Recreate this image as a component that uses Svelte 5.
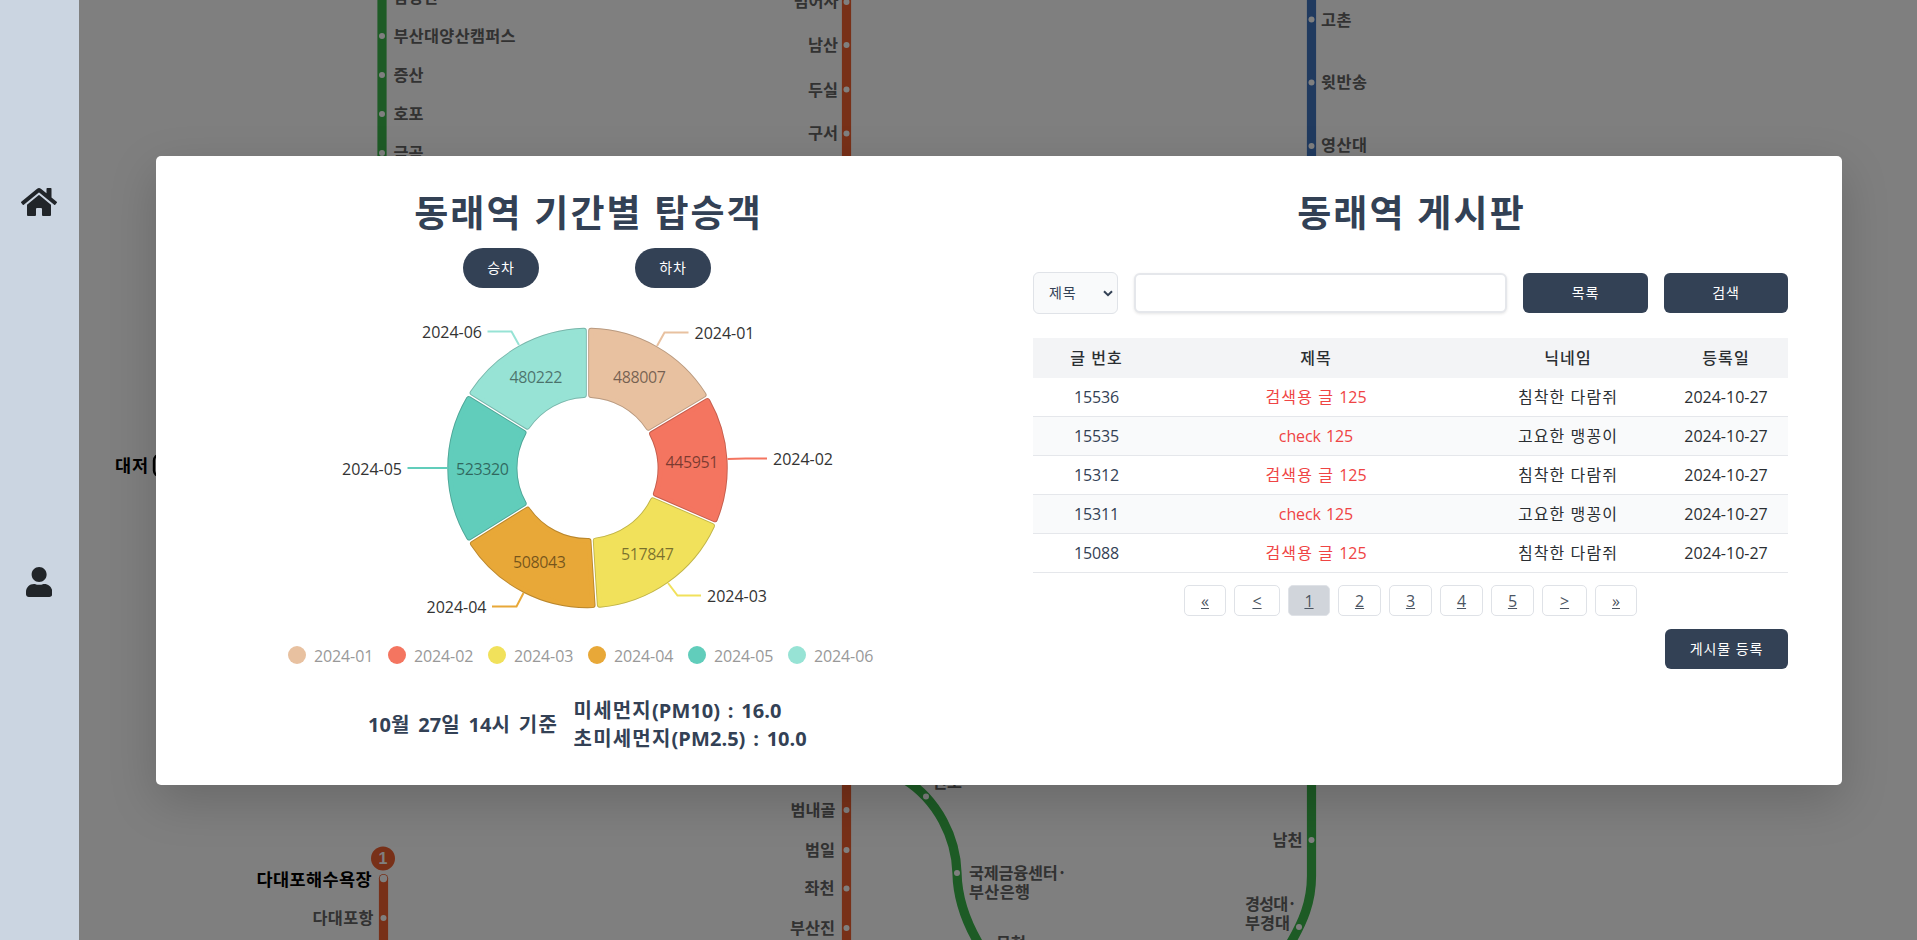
<script>
  const months = [
    { name: '2024-01', value: 488007, color: '#e8c1a0', line: '69.5,-122 77,-135.5 101,-135.5', tx: 107, anchor: 'start', vx: 52, vy: -91 },
    { name: '2024-02', value: 445951, color: '#f47560', line: '140,-9 158,-9.6 179.5,-9.6', tx: 185.5, anchor: 'start', vx: 104.5, vy: -6 },
    { name: '2024-03', value: 517847, color: '#f1e15b', line: '80.5,115 90,127.5 113.5,127.5', tx: 119.5, anchor: 'start', vx: 60, vy: 86 },
    { name: '2024-04', value: 508043, color: '#e8a838', line: '-64,125 -71,138.5 -95.5,138.5', tx: -101.5, anchor: 'end', vx: -48, vy: 94 },
    { name: '2024-05', value: 523320, color: '#61cdbb', line: '-140,0 -158,0 -180,0', tx: -186, anchor: 'end', vx: -105, vy: 1 },
    { name: '2024-06', value: 480222, color: '#97e3d5', line: '-68.5,-123 -76,-136.5 -100,-136.5', tx: -106, anchor: 'end', vx: -51.5, vy: -91 }
  ];
  const total = months.reduce((s, m) => s + m.value, 0);
  const pt = (r, a) => `${(r * Math.sin(a)).toFixed(2)} ${(-r * Math.cos(a)).toFixed(2)}`;

  function ring(a0, a1, inset) {
    const R = 140.3 - inset + 0.6;
    const r = 70 + inset - 0.6;
    const o = Math.asin(inset / R);
    const i = Math.asin(inset / r);
    return `M${pt(R, a0 + o)}A${R} ${R} 0 0 1 ${pt(R, a1 - o)}L${pt(r, a1 - i)}A${r} ${r} 0 0 0 ${pt(r, a0 + i)}Z`;
  }
  let acc = 0;
  const slices = months.map((m) => {
    const a0 = (acc / total) * Math.PI * 2;
    acc += m.value;
    const a1 = (acc / total) * Math.PI * 2;
    return { ...m, d: ring(a0, a1, 3.6) };
  });

  const dots = [
    [382, 36], [382, 75], [382, 114], [382, 153],
    [846.5, 2], [846.5, 45], [846.5, 89.5], [846.5, 133.5],
    [1311.5, 19.5], [1311.5, 82.5], [1311.5, 146],
    [846.5, 810], [846.5, 850], [846.5, 888.5], [846.5, 928],
    [926, 796.5], [957, 873], [1311.5, 840], [1299, 927], [383.5, 918]
  ];
  const stations = [
    ['남양산', 393.5, -3, 45], ['부산대양산캠퍼스', 393.5, 36, 122], ['증산', 393.5, 75, 30], ['호포', 393.5, 114, 30], ['금곡', 393.5, 153, 30],
    ['범어사', 793.5, 1, 45], ['남산', 808, 45, 30], ['두실', 808, 90, 30], ['구서', 808, 133, 30],
    ['고촌', 1321, 19.5, 30.5], ['윗반송', 1321, 82, 46], ['영산대', 1321, 145, 46],
    ['범내골', 790.5, 810, 45], ['범일', 805, 850, 30], ['좌천', 804.5, 888, 30], ['부산진', 790, 928, 45],
    ['전포', 932, 782, 30], ['국제금융센터·', 969, 873, 98], ['부산은행', 969, 892, 61], ['문현', 996, 943, 30],
    ['남천', 1272.5, 840, 30], ['경성대·', 1245, 904, 52], ['부경대', 1245, 922.5, 45], ['다대포항', 312.5, 918, 61]
  ];

  const posts = [
    [15536, '검색용 글 125', '침착한 다람쥐'],
    [15535, 'check 125', '고요한 맹꽁이'],
    [15312, '검색용 글 125', '침착한 다람쥐'],
    [15311, 'check 125', '고요한 맹꽁이'],
    [15088, '검색용 글 125', '침착한 다람쥐']
  ];
  const pages = [['«', 42], ['<', 46], ['1', 42], ['2', 43], ['3', 43], ['4', 43], ['5', 43], ['>', 45], ['»', 42]];
  const runs = (t) => t.split(/([0-9A-Za-z().:\-]+)/).filter((s) => s);
</script>

{#snippet mixed(text)}{#each runs(text) as r}{#if /[0-9A-Za-z():]/.test(r)}<span class="lat">{r}</span>{:else}{r}{/if}{/each}{/snippet}

<div class="page">
  <nav class="sidebar">
    <svg class="home" viewBox="0 0 576 512" aria-label="home"><path d="M280.37 148.26L96 300.11V464a16 16 0 0 0 16 16l112.06-.29a16 16 0 0 0 15.92-16V368a16 16 0 0 1 16-16h64a16 16 0 0 1 16 16v95.64a16 16 0 0 0 16 16.05L464 480a16 16 0 0 0 16-16V300L295.67 148.26a12.19 12.19 0 0 0-15.3 0zM571.6 251.47L488 182.56V44.05a12 12 0 0 0-12-12h-56a12 12 0 0 0-12 12v72.61L318.47 43a48 48 0 0 0-61 0L4.34 251.47a12 12 0 0 0-1.6 16.9l25.5 31A12 12 0 0 0 45.15 301l235.22-193.74a12.19 12.19 0 0 1 15.3 0L530.9 301a12 12 0 0 0 16.9-1.6l25.5-31a12 12 0 0 0-1.7-16.93z" /></svg>
    <svg class="user" viewBox="0 0 448 512" aria-label="user"><path d="M224 256c70.7 0 128-57.3 128-128S294.7 0 224 0 96 57.3 96 128s57.3 128 128 128zm89.6 32h-16.7c-22.2 10.2-46.9 16-72.9 16s-50.6-5.8-72.9-16h-16.7C60.2 288 0 348.2 0 422.4V464c0 26.5 21.5 48 48 48h352c26.5 0 48-21.5 48-48v-41.6c0-74.2-60.2-134.4-134.4-134.4z" /></svg>
  </nav>

  <main class="stage">
    <svg class="map" viewBox="79 0 1838 940" width="1838" height="940">
      <g fill="none" stroke-width="9.2">
        <path d="M382 0V160" stroke="#3ab64a" />
        <path d="M846.5 0V940" stroke="#f06031" />
        <path d="M383.5 878V940" stroke="#f06031" />
        <circle cx="383.5" cy="878.5" r="4.6" fill="#f06031" stroke="none" />
        <path d="M1311.5 0V160" stroke="#4074bf" />
        <path d="M904 779C938 800 956 838 957 873C957.5 900 966 922 979 944" stroke="#3ab64a" />
        <path d="M1311.5 780V876C1311.5 902 1303 922 1290 944" stroke="#3ab64a" />
      </g>
      {#each dots as [x, y]}<circle cx={x} cy={y} r="3" fill="#fff" />{/each}
      <circle cx="383.5" cy="878.5" r="3.7" fill="#fff" />
      <circle cx="383" cy="858.5" r="12" fill="#f06031" />
      <text class="badge" x="383" y="864" text-anchor="middle">1</text>
      {#each stations as [name, x, y, w]}
        <text class="station" {x} y={y + 6} textLength={w}>{name}</text>
      {/each}
      <text class="terminal" x="115" y="471.5" textLength="33">대저</text>
      <rect x="154" y="454.5" width="34" height="22" rx="6" fill="#fff" stroke="#000" stroke-width="2.4" />
      <text class="terminal" x="256.5" y="886" textLength="115">다대포해수욕장</text>
    </svg>

    <div class="overlay">
      <section class="modal">
        <div class="left">
          <h1>동래역 기간별 탑승객</h1>
          <div class="toggle">
            <button class="pill">승차</button>
            <button class="pill">하차</button>
          </div>
          <svg class="chart" viewBox="-431.5 -180 863 352" width="863" height="352">
            {#each slices as s}
              <path d={s.d} fill={s.color} stroke={s.color} stroke-width="5.8" stroke-linejoin="round" />
              <path d={s.d} fill="none" stroke="#000" stroke-opacity=".2" stroke-width="5.8" stroke-linejoin="round" />
              <path d={s.d} fill={s.color} stroke={s.color} stroke-width="4" stroke-linejoin="round" />
              <polyline points={s.line} fill="none" stroke={s.color} stroke-width="2" />
            {/each}
            {#each slices as s}
              <text x={s.vx - 26.5} y={s.vy + 6} textLength="53" fill="#000" fill-opacity=".5">{s.value}</text>
              <text x={s.anchor === 'end' ? s.tx - 59.5 : s.tx} y={Number(s.line.split(',').pop()) + 6.5} textLength="60" fill="#333">{s.name}</text>
            {/each}
          </svg>
          <ul class="legend">
            {#each months as m}
              <li><i style:background={m.color}></i><span>{m.name}</span></li>
            {/each}
          </ul>
          <div class="air">
            <p>{@render mixed('10월 27일 14시 기준')}</p>
            <div>
              <p>{@render mixed('미세먼지(PM10) : 16.0')}</p>
              <p>{@render mixed('초미세먼지(PM2.5) : 10.0')}</p>
            </div>
          </div>
        </div>

        <div class="right">
          <h1>동래역 게시판</h1>
          <div class="search">
            <div class="select">
              제목
              <svg viewBox="0 0 10 7" width="10" height="7"><path d="M1 1.2L5 5.2L9 1.2" fill="none" stroke="#334155" stroke-width="2" /></svg>
            </div>
            <input type="text" aria-label="검색" />
            <button class="btn list">목록</button>
            <button class="btn find">검색</button>
          </div>
          <div class="table">
            <div class="row head"><span>글 번호</span><span>제목</span><span>닉네임</span><span>등록일</span></div>
            {#each posts as [id, title, nick]}
              <div class="row">
                <span class="id">{@render mixed(String(id))}</span>
                <span class="title">{@render mixed(title)}</span>
                <span>{nick}</span>
                <span class="date">{@render mixed('2024-10-27')}</span>
              </div>
            {/each}
          </div>
          <div class="pages">
            {#each pages as [label, w]}
              <span class="pg" class:active={label === '1'} style:width="{w}px">{label}</span>
            {/each}
          </div>
          <button class="btn write">게시물 등록</button>
        </div>
      </section>
    </div>
  </main>
</div>

<style>
  :global(body) { margin: 0; overflow: hidden; }
  .page {
    display: flex;
    width: 1917px;
    height: 940px;
    overflow: hidden;
    color: #2a2e32;
    font: 400 16px/24px "Open Sans", "Noto Sans CJK KR", sans-serif;
  }
  .sidebar {
    display: flex;
    flex-direction: column;
    align-items: center;
    box-sizing: border-box;
    flex: none;
    width: 79px;
    padding-right: 1px;
    background: #cbd5e1;
  }
  .sidebar svg { fill: #212529; }
  .home { width: 36px; height: 32px; margin-top: 186px; }
  .user { width: 26.25px; height: 30px; margin-top: 349px; }
  .stage { position: relative; flex: 1; overflow: hidden; background: #fff; }
  .map { display: block; }
  .station { font: 600 16.3px "Noto Sans CJK KR", sans-serif; fill: #646464; }
  .terminal { font: 700 17.5px "Noto Sans CJK KR", sans-serif; fill: #000; }
  .badge { font: 700 16px "Liberation Sans", sans-serif; fill: #fff; }
  .overlay {
    position: absolute;
    inset: 0;
    background: rgba(0, 0, 0, .5);
    padding: 156px 75px 155px 77px;
    box-sizing: border-box;
  }
  .modal {
    display: flex;
    height: 629px;
    border-radius: 5px;
    background: #fff;
    box-shadow: 0 16px 48px rgba(0, 0, 0, .175);
  }
  .left { width: 863px; padding-top: 29px; }
  .right {
    display: flex;
    flex-direction: column;
    flex: 1;
    padding: 29px 54px 0 14px;
  }
  h1 {
    margin: 0;
    padding-left: 2px;
    text-align: center;
    font-size: 37px;
    line-height: 55px;
    height: 56px;
    font-weight: 700;
    letter-spacing: 2.1px;
    color: #334155;
  }
  .toggle { display: flex; justify-content: center; gap: 96px; margin-top: 7px; padding-right: 1px; }
  button {
    border: 0;
    padding: 0;
    height: 40px;
    background: #334155;
    color: #fff;
    font: 400 14px/20px "Open Sans", "Noto Sans CJK KR", sans-serif;
    letter-spacing: .95px;
  }
  .pill { width: 76px; border-radius: 20px; }
  .chart { display: block; font-size: 16px; }
  .legend {
    display: flex;
    margin: 0;
    padding: 0 0 0 132px;
    height: 30px;
    list-style: none;
    align-items: center;
    color: #999;
    font-size: 16px;
    letter-spacing: -.12px;
  }
  .legend li { display: flex; align-items: center; gap: 8px; width: 100px; }
  .legend span { padding-top: 1px; }
  .legend i { width: 18px; height: 18px; border-radius: 50%; }
  .air {
    display: flex;
    align-items: center;
    gap: 15.5px;
    margin-top: 27px;
    padding-left: 212px;
    color: #334155;
    font-size: 20px;
    font-weight: 700;
    line-height: 28px;
    letter-spacing: 1.2px;
    word-spacing: 1.3px;
    white-space: nowrap;
  }
  .air p { margin: 0; }
  .lat { letter-spacing: -.12px; }
  .date .lat { letter-spacing: 0; }
  .air .lat { letter-spacing: .05px; }
  .search { display: flex; align-items: center; gap: 16px; height: 42px; margin-top: 31px; }
  .select {
    display: flex;
    align-items: center;
    justify-content: space-between;
    box-sizing: border-box;
    width: 85px;
    height: 42px;
    padding: 0 4px 0 15px;
    border: 1px solid #e0e3e8;
    border-radius: 6px;
    background: #f9fafb;
    color: #334155;
    font-size: 14px;
    letter-spacing: .8px;
  }
  input {
    box-sizing: border-box;
    width: 373px;
    height: 40px;
    border: 2px solid #e5e7eb;
    border-radius: 6px;
    background: #fff;
    box-shadow: 0 1px 3px rgba(0, 0, 0, .1);
  }
  .btn { border-radius: 6px; }
  .list { width: 125px; }
  .find { width: 124px; }
  .table { margin-top: 24px; }
  .row {
    display: grid;
    grid-template-columns: 127px 312px 192px 124px;
    align-items: center;
    box-sizing: border-box;
    height: 39px;
    border-bottom: 1px solid #e5e7eb;
    text-align: center;
    letter-spacing: 1.1px;
  }
  .row:nth-child(odd) { background: #f9fafb; }
  .row.head { height: 40px; border: 0; background: #f3f4f6; font-weight: 500; }
  .id { color: #334155; }
  .title { color: #ef4444; }
  .pages { display: flex; justify-content: center; gap: 8px; margin-top: 12px; }
  .pg {
    box-sizing: border-box;
    height: 31px;
    border: 1px solid #dfe2e7;
    border-radius: 5px;
    color: #4b5563;
    line-height: 30px;
    text-align: center;
    text-decoration: underline;
  }
  .active { background: #d1d5db; }
  .write { align-self: flex-end; width: 123px; margin-top: 13px; }
</style>
